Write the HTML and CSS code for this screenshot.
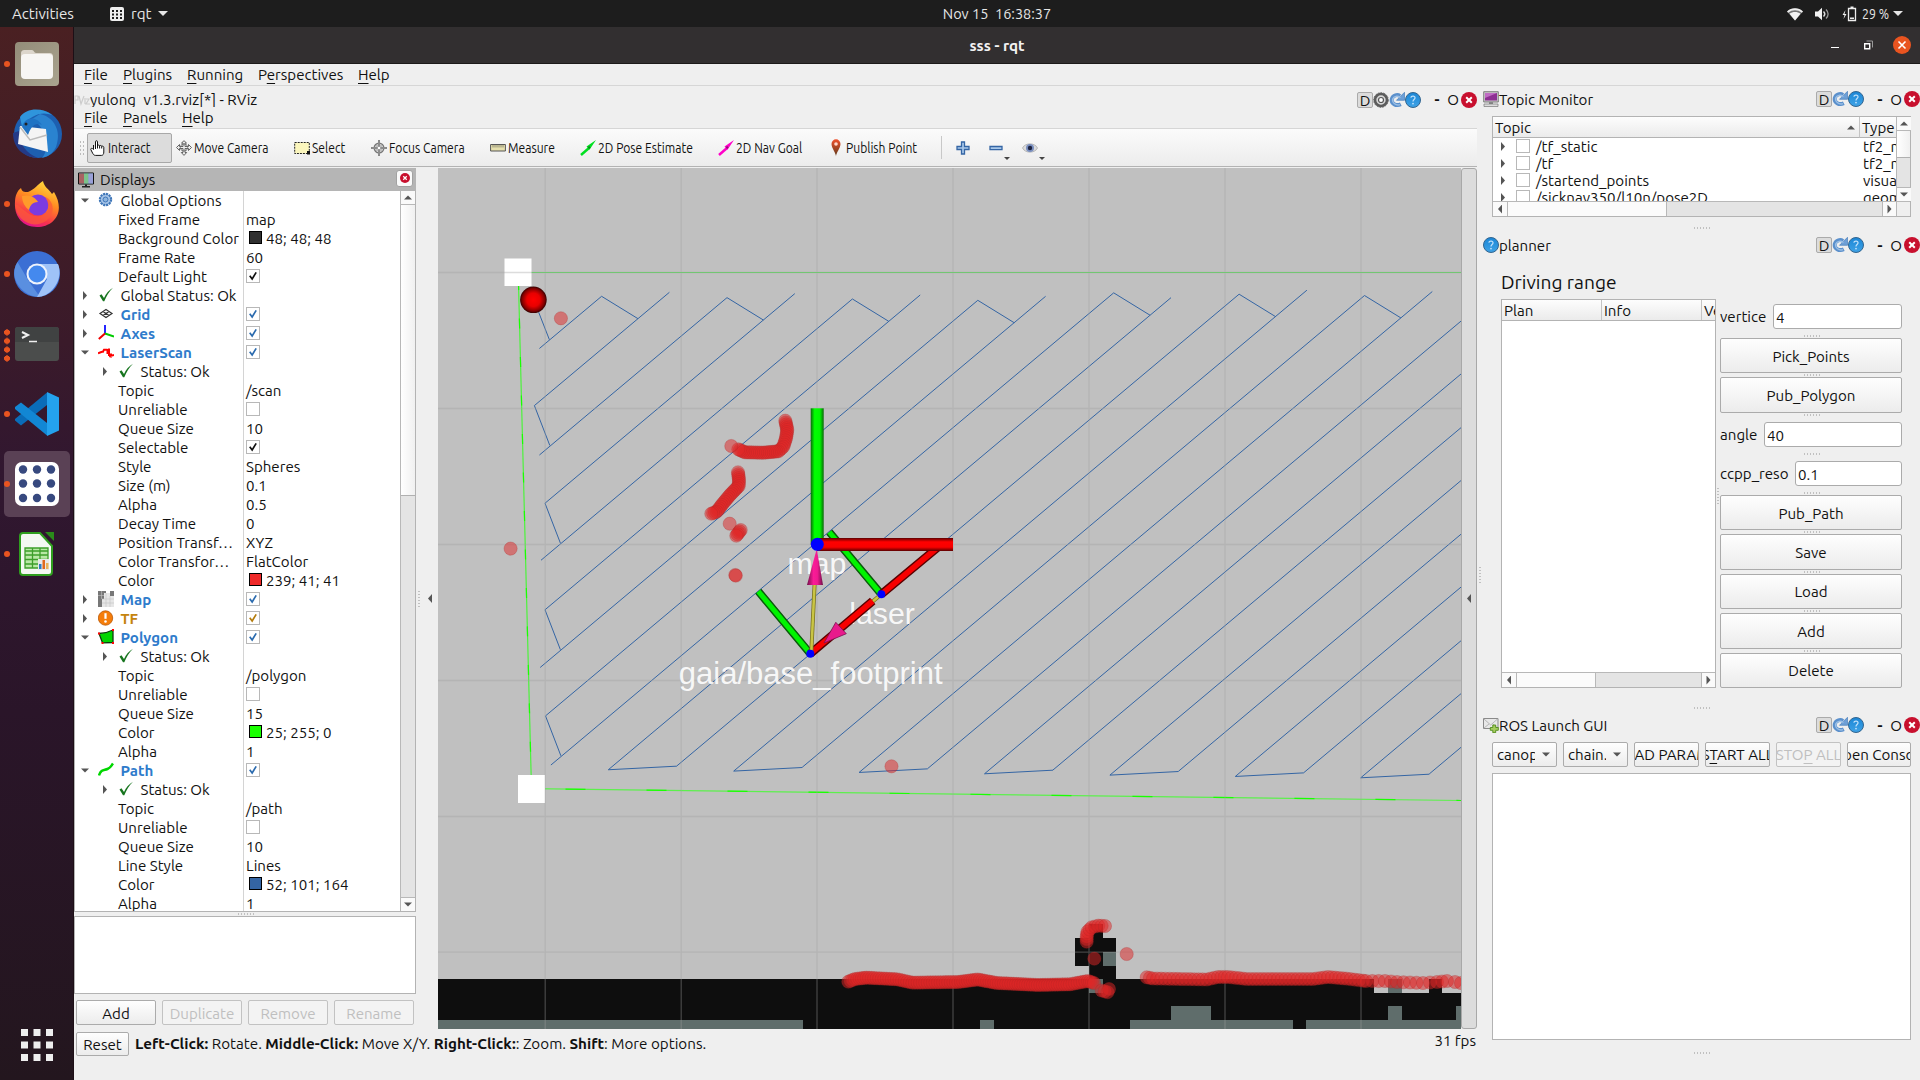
FILE: index.html
```html
<!DOCTYPE html>
<html lang="en">
<head>
<meta charset="utf-8">
<title>sss - rqt</title>
<link rel="stylesheet" href="styles.css">
</head>
<body>
<svg class="defs" width="0" height="0">
  <defs>
    <linearGradient id="gBlue" x1="0" y1="0" x2="0" y2="1"><stop offset="0" stop-color="#1b86d6"/><stop offset="1" stop-color="#3fa3e6"/></linearGradient>
    <linearGradient id="gFox" x1=".8" y1="0" x2=".4" y2="1"><stop offset="0" stop-color="#ffe23e"/><stop offset=".45" stop-color="#ff8a22"/><stop offset=".8" stop-color="#f8344b"/><stop offset="1" stop-color="#e31587"/></linearGradient>
    <linearGradient id="gFiles" x1="0" y1="0" x2="1" y2="1"><stop offset="0" stop-color="#938c79"/><stop offset="1" stop-color="#aaa48f"/></linearGradient>
    <linearGradient id="gPin" x1="0" y1="0" x2="0" y2="1"><stop offset="0" stop-color="#f0512c"/><stop offset="1" stop-color="#5d3a1c"/></linearGradient>
    <linearGradient id="gGreenV"><stop offset="0" stop-color="#0a6a0a"/><stop offset=".3" stop-color="#00ff00"/><stop offset=".7" stop-color="#00f800"/><stop offset="1" stop-color="#0a6a0a"/></linearGradient>
    <linearGradient id="gRedH" x1="0" y1="0" x2="0" y2="1"><stop offset="0" stop-color="#5a0000"/><stop offset=".3" stop-color="#ff0000"/><stop offset=".7" stop-color="#f80000"/><stop offset="1" stop-color="#5a0000"/></linearGradient>
    <linearGradient id="gCone"><stop offset="0" stop-color="#6e1148"/><stop offset=".4" stop-color="#fb1b98"/><stop offset=".65" stop-color="#f01a90"/><stop offset="1" stop-color="#6e1148"/></linearGradient>
    <radialGradient id="gBall"><stop offset="0" stop-color="#ff0000"/><stop offset=".5" stop-color="#e80000"/><stop offset=".85" stop-color="#800000"/><stop offset="1" stop-color="#300"/></radialGradient>
    <symbol id="check" viewBox="0 0 16 16"><path d="M1.5 8.5 3.5 7.2 6 11C8 6.500 11 3 15 .8 11 4.500 8.500 9 6.300 14.300L5 14.300Z" fill="#17751f"/></symbol>
    <symbol id="tick" viewBox="0 0 14 14"><path d="M3.200 6.800 6 10.500 10.700 2.800" fill="none" stroke="currentColor" stroke-width="2"/></symbol>
    <symbol id="gearb" viewBox="0 0 16 16"><circle cx="7.500" cy="7.500" r="5.600" fill="#a9c6e8" stroke="#3f76b8" stroke-width="2.200" stroke-dasharray="2.200 .7"/><circle cx="7.500" cy="7.500" r="2.500" fill="#8db4de" stroke="#3f76b8"/></symbol>
    <symbol id="grid" viewBox="0 0 16 16"><path d="M8 3.500 14 7.500 8 11.500 2 7.500ZM5 5.500 11 9.500M11 5.500 5 9.500" fill="none" stroke="#333" stroke-width="1.200"/></symbol>
    <symbol id="axes" viewBox="0 0 16 16"><path d="M7 9V0" stroke="#00f" stroke-width="1.700"/><path d="M7 8.500 16 11.500" stroke="#0c0" stroke-width="1.900"/><path d="M7 8.500 .8 14" stroke="#e00" stroke-width="2"/></symbol>
    <symbol id="scan" viewBox="0 0 16 16"><path d="M0 9.300 4 7.800M4.500 8.500 6 5.800H9.500M9.500 5V10M11 4.500V12M11 12.200 16 11M13 9.500V13.500" fill="none" stroke="#f00" stroke-width="2"/></symbol>
    <symbol id="mapi" viewBox="0 0 16 16"><path d="M0 0H8V2H6V8H4V16H0Z" fill="#777"/><path d="M12 0H16V5H12Z" fill="#777"/><path d="M8 2H12V5H16V16H4V8H6V2Z" fill="#e6e6e6"/><path d="M4 8H16M4 12H16M8 2V16M12 5V16M3.500 0V8M0 4.500H6" stroke="#c2c2c2" stroke-width=".6"/></symbol>
    <symbol id="warn" viewBox="0 0 16 16"><circle cx="7.500" cy="8" r="7.200" fill="#f57d0a" stroke="#b95503" stroke-width=".8"/><path d="M7.500 3.200V8.800" stroke="#fff" stroke-width="2.200"/><circle cx="7.500" cy="11.500" r="1.300" fill="#fff"/></symbol>
    <symbol id="poly" viewBox="0 0 16 16"><path d="M1 4.500C6 4.500 11 3 15 1V13.500L4.500 13.800Z" fill="#00d600" stroke="#0b3b0b" stroke-width="1.300"/><path d="M0 3.500h2v2H0zM14 0h2v2h-2zM3.500 13h2v2h-2zM14 13h2v2h-2z" fill="#f00"/></symbol>
    <symbol id="path" viewBox="0 0 16 16"><path d="M1 13.500C3 7 6 8.500 9.500 7 13 5.500 13 4 15 1.500" fill="none" stroke="#00d600" stroke-width="2.500"/></symbol>
    <symbol id="disp" viewBox="0 0 16 16"><path d="M.5 1h15v11H.5z" fill="#7ab" stroke="#111"/><path d="M1 1.500h5v10H1z" fill="#a86262"/><path d="M6 1.500h4.500v10H6z" fill="#7cc28a"/><path d="M10.500 1.500H15v10h-4.500z" fill="#9aa0d8"/><path d="M7 12.500h2v1.500h3v1.500H4V14h3z" fill="#222"/></symbol>
    <symbol id="closex" viewBox="0 0 16 16"><circle cx="8" cy="8" r="8" fill="#c8102e"/><path d="M5.200 5.200 10.800 10.800M10.800 5.200 5.200 10.800" stroke="#fff" stroke-width="2"/></symbol>
    <symbol id="help" viewBox="0 0 16 16"><circle cx="8" cy="8" r="7.500" fill="url(#gBlue)" stroke="#33658f"/><path d="M5.800 5.600C6.300 3.400 10.200 3.600 10 6 9.800 7.500 8 7.600 8 9.500" fill="none" stroke="#bfe0fa" stroke-width="1.300"/><circle cx="8" cy="11.600" r=".9" fill="#bfe0fa"/></symbol>
    <symbol id="reload" viewBox="0 0 16 16"><path d="M11.800 12.200C7 14.500 2 11.500 2.800 7 4 3 8.500 2.200 11 4" fill="none" stroke="#5b90cc" stroke-width="4"/><path d="M15.500.3V8.300H7.500Z" fill="#6d9fd6" stroke="#4a80bd" stroke-width=".7"/><path d="M11 12.600C7 13.800 3 11 3.700 7 5 4 8.500 3.500 11.500 5.500" fill="none" stroke="#9cc0e6" stroke-width="1.500"/></symbol>
    <symbol id="gear" viewBox="0 0 16 16"><circle cx="8" cy="8" r="6" fill="#d8d8d8" stroke="#5c5c5c" stroke-width="2.600"/><circle cx="8" cy="8" r="7.300" fill="none" stroke="#666" stroke-dasharray="1.800 1"/><circle cx="8" cy="8" r="2.500" fill="#fff" stroke="#555" stroke-width="1.200"/></symbol>
    <symbol id="monitor" viewBox="0 0 16 16"><path d="M.7.700h14.600v10.300H.7z" fill="#c9c9c9" stroke="#666" stroke-width=".8"/><path d="M2 2h12v7.500H2z" fill="#8d2f92"/><path d="M2 2h12L2 7z" fill="#c06cc4"/><path d="M6 11h4v2H6z" fill="#888"/><path d="M1 13h14v2.500H1z" fill="#ddd" stroke="#777" stroke-width=".7"/></symbol>
    <symbol id="mail" viewBox="0 0 16 16"><path d="M.5 1.500h14.500v10H.5z" fill="#e8e8e8" stroke="#8a8a8a"/><path d="M1 2 7.700 8 14.500 2M1 11 6 7M14.500 11 9.500 7" fill="none" stroke="#aaa" stroke-width=".8"/><path d="M9.800 8h2.900v2.500h2.600v2.800h-2.600v2.400H9.800v-2.400H7.300v-2.800h2.500z" fill="#a5cc5e" stroke="#4e8a16" stroke-width=".9"/></symbol>
    <symbol id="hand" viewBox="0 0 16 16"><path d="M5.500 9V1.800C5.500.3 7.500.3 7.500 1.800V6.500 5.500C8 4.800 9.500 5 9.600 6 10 5.200 11.500 5.300 11.700 6.300 12.500 5.800 13.800 6.200 13.800 7.500V12C13.800 14 13 15.400 11.500 15.400H5.500C4 15.400 3.500 14.500 2.800 13.500L.8 9.500C.6 8.500 1.500 8 2.500 8.600L3.500 9.500 3.500 5M9.600 6V8.500M11.700 6.300V8.500M7.500 6V8.500" fill="#fff" stroke="#111"/></symbol>
    <symbol id="move" viewBox="0 0 16 16"><path d="M8 .7 10.500 3H9V6.500H12.500V4.500L15.500 7.500 12.500 10.500V8.500H9V12.500H10.700L8 15.400 5.300 12.500H7V8.500H3.500V10.500L.5 7.500 3.500 4.500V6.500H7V3H5.500Z" fill="#eee" stroke="#555" stroke-width=".9"/><circle cx="8" cy="7.500" r="3.600" fill="none" stroke="#666" stroke-width=".8"/></symbol>
    <symbol id="select" viewBox="0 0 16 16"><path d="M.7 2.500h14.600v11H.7z" fill="#fbf6bd" stroke="#222" stroke-dasharray="2 1"/><path d="M13 11l3 0v3.500h-3z" fill="#111"/></symbol>
    <symbol id="focus" viewBox="0 0 16 16"><circle cx="8" cy="8" r="4.800" fill="#e8e8e8" stroke="#777" stroke-width="1.400"/><path d="M8 0V16M0 8H16" stroke="#888" stroke-width="2"/><path d="M8 1V15M1 8H15M6 4.500V11.500M10 4.500V11.500M4.500 6H11.500M4.500 10H11.500" stroke="#999" stroke-width=".6"/><circle cx="8" cy="8" r="1.300" fill="#fff"/></symbol>
    <symbol id="ruler" viewBox="0 0 16 16"><path d="M.6 4.500h14.800v6.500H.6z" fill="#e6e0ae" stroke="#555"/><path d="M3 5v2.500M5 5v2.500M7 5v2.500M9 5v2.500M11 5v2.500M13 5v2.500" stroke="#776" stroke-width=".8"/></symbol>
    <symbol id="arrow" viewBox="0 0 16 16"><path d="M1 15 9 8" stroke="currentColor" stroke-width="2.500"/><path d="M16 0 6.500 6.500 9.500 9.800Z" fill="currentColor"/><path d="M8.500 6.500 9.800 8.300" stroke="#222" stroke-opacity=".5" stroke-width="2"/></symbol>
    <symbol id="pin" viewBox="0 0 16 18"><path d="M8 17.500C8 14 3.500 9 3.500 5A4.500 4.700 0 0 1 12.500 5C12.500 9 8 14 8 17.500Z" fill="url(#gPin)"/><circle cx="8" cy="5" r="1.800" fill="#ffd9cc"/></symbol>
    <symbol id="plus" viewBox="0 0 14 14"><path d="M5.500 1h3v4.500H13v3H8.500V13h-3V8.500H1v-3h4.500z" fill="#a8c8ea" stroke="#3465a4" stroke-width="1.300"/></symbol>
    <symbol id="minus" viewBox="0 0 14 14"><path d="M1 5.500h12v3.200H1z" fill="#a8c8ea" stroke="#3465a4" stroke-width="1.300"/></symbol>
    <symbol id="eye" viewBox="0 0 16 16"><path d="M.5 8C3 2.500 13 2.500 15.500 8 13 13.500 3 13.500.5 8Z" fill="#dcdcdc" stroke="#aaa" stroke-width=".8"/><circle cx="8" cy="8" r="4" fill="#7a8fc0"/><circle cx="8" cy="8" r="2.200" fill="#1d2340"/></symbol>
  </defs>
</svg>

<header class="topbar">
  <div class="tb-left"><span class="act">Activities</span>
    <svg width="14" height="14" viewBox="0 0 14 14"><rect width="14" height="14" rx="2" fill="#eee"/><path d="M2 3h2v2H2zM6 3h2v2H6zM10 3h2v2h-2zM2 6.500h2v2H2zM6 6.500h2v2H6zM10 6.500h2v2h-2zM2 10h2v2H2zM6 10h2v2H6zM10 10h2v2h-2z" fill="#1d1d1d"/></svg>
    <span>rqt</span><i class="tri"></i></div>
  <div class="clock">Nov 15&nbsp; 16:38:37</div>
  <div class="tb-right">
    <svg class="wifi" width="16" height="14" viewBox="0 0 16 14"><path d="M0 4.500C4.500.2 11.500.2 16 4.500L8 13.500Z" fill="#777"/><path d="M0 4.500C4.500.2 11.500.2 16 4.500L14.800 5.800C11 2.500 5 2.500 1.200 5.800Z" fill="#eee"/><path d="M2.500 6.800C5.500 4.300 10.500 4.300 13.500 6.800L8 13.500Z" fill="#f2f2f2"/></svg>
    <svg class="vol" width="14" height="14" viewBox="0 0 14 14"><path d="M0 4.500h3L7 .8v12.400L3 9.500H0z" fill="#f2f2f2"/><path d="M8.500 4.500c1.500 1.500 1.500 3.500 0 5" stroke="#ddd" fill="none" stroke-width="1.500"/><path d="M11 2.500c2.800 2.700 2.800 6.300 0 9" stroke="#999" fill="none" stroke-width="1.300"/></svg>
    <svg width="15" height="16" viewBox="0 0 15 16"><path d="M3.500 4 .5 9h2L1.500 13 4.500 8h-2z" fill="#eee"/><path d="M6.500 2.500h7v12h-7z" fill="none" stroke="#eee" stroke-width="1.300"/><path d="M8.500.5h3v2h-3zM8 11.500h4v1.500H8z" fill="#eee"/></svg>
    <span class="cond">29 %</span><i class="tri"></i>
  </div>
</header>

<div class="body">
<nav class="dock">
  <div class="app"><i class="dot"></i><svg width="44" height="44" viewBox="0 0 44 44"><rect width="44" height="44" rx="4" fill="url(#gFiles)"/><path d="M6 12c0-3 1-4 4-4h7c2 0 2 3 4 3h13c3 0 4 1 4 4v5H6z" fill="#dcd6cc"/><rect x="6" y="12" width="32" height="25" rx="4" fill="#f7f6f4"/></svg></div>
  <div class="app"><svg width="50" height="50" viewBox="0 0 50 50"><circle cx="26" cy="25" r="24" fill="#1d5fb0"/><path d="M8 8C14-1 30-2 40 6 30 2 18 6 10 18Z" fill="#2f95dc"/><path d="M28 5C42 8 50 22 44 38 40 46 34 48 30 49 38 40 36 20 20 10Z" fill="#2a83d0"/><path d="M1 24C1 38 10 48 26 49 14 44 8 36 7 22Z" fill="#243a86"/><path d="M8 17 34 20 36 43 6 35Z" fill="#f4f4f4"/><path d="M8 18 18 31 35 26" fill="none" stroke="#bbb" stroke-width="1.500"/><path d="M10 18C12 8 24 6 30 16 22 12 18 20 16 26Z" fill="#1f73c4"/><circle cx="14" cy="15" r="1.500" fill="#222"/></svg></div>
  <div class="app"><i class="dot"></i><svg width="46" height="48" viewBox="0 0 46 48"><path d="M1 22C1 16 3 11 7 8 8 12 10 12 14 12 20 10 24 4 29 1 30 7 35 9 38 14L40 12C52 32 40 47 23 47 8 47 0 36 1 22Z" fill="url(#gFox)"/><circle cx="24" cy="25" r="10.500" fill="#7b3be0"/><path d="M8 16C16 14 22 18 24 22 18 22 16 26 15 30 11 27 8 22 8 16Z" fill="#ff9a2a"/><path d="M1 24C8 26 14 38 26 36 36 34 36 24 31 17 40 20 42 34 32 41 18 50 2 40 1 24Z" fill="#fb5a3a" opacity=".75"/></svg></div>
  <div class="app"><i class="dot"></i><svg width="46" height="46" viewBox="0 0 46 46"><circle cx="23" cy="23" r="23" fill="#3b6fd4"/><path d="M3.500 11 14 29 26 46C10 46-7 28 3.500 11Z" fill="#5a8fe0"/><path d="M23 13H44C50 28 38 46 23 46L33 28Z" fill="#9fc3f8"/><circle cx="23" cy="23" r="10.500" fill="#eef3fc"/><circle cx="23" cy="23" r="8.500" fill="#4489ee"/></svg></div>
  <div class="app"><i class="dots4"></i><svg width="44" height="34" viewBox="0 0 44 34"><rect width="44" height="34" rx="3" fill="#4b4d4c"/><path d="M0 3Q0 0 3 0H41Q44 0 44 3V15H0Z" fill="#404242"/><path d="M7 5 13 8 7 11" fill="none" stroke="#f0f0f0" stroke-width="2"/><path d="M14 14.500h8" stroke="#f0f0f0" stroke-width="1.500"/></svg></div>
  <div class="app"><i class="dot"></i><svg width="44" height="44" viewBox="0 0 44 44"><path d="M32 .5V13L6 33.500 0 28.500V27Z" fill="#0a6cb8"/><path d="M6 10.500 32 31V43.500L0 17V15Z" fill="#1287d4"/><path d="M32 0 44 5.500V38.500L32 44Z" fill="#24a2ee"/></svg></div>
  <div class="app active"><i class="dot"></i><svg width="44" height="44" viewBox="0 0 44 44"><rect width="44" height="44" rx="7" fill="#fff"/><g fill="#37497f"><circle cx="8" cy="7.500" r="4.200"/><circle cx="22" cy="7.500" r="4.200"/><circle cx="36" cy="7.500" r="4.200"/><circle cx="8" cy="21.500" r="4.200"/><circle cx="22" cy="21.500" r="4.200"/><circle cx="36" cy="21.500" r="4.200"/><circle cx="8" cy="36" r="4.200"/><circle cx="22" cy="36" r="4.200"/><circle cx="36" cy="36" r="4.200"/></g></svg></div>
  <div class="app"><i class="dot"></i><svg width="35" height="44" viewBox="0 0 35 44"><path d="M4 1H21L33 14V40Q33 43 30 43H4Q1 43 1 40V4Q1 1 4 1Z" fill="#f4f8f2" stroke="#2f9e1e" stroke-width="2"/><path d="M26 0h9v9z" fill="#2a8a1a"/><path d="M6 16H29V36H6Z" fill="#b9e8a5" stroke="#3d9e2a" stroke-width="1.300"/><path d="M6 19H29M6 23H29M6 27.500H29M6 32H29M13.500 16V36M21 16V36" stroke="#3d9e2a" stroke-width="1.300"/><path d="M19 27h11v11H19z" fill="#e8e8e8"/><path d="M20 32h2.500v5H20z" fill="#2c7cc0"/><path d="M23.500 28H26v9h-2.500z" fill="#e0691d"/><path d="M27 31h2.500v6H27z" fill="#e8b45a"/></svg></div>
  <svg class="appgrid" width="32" height="32" viewBox="0 0 32 32" fill="#eee"><path d="M0 0h7v7H0zM12.500 0h7v7h-7zM25 0h7v7h-7zM0 12.500h7v7H0zM12.500 12.500h7v7h-7zM25 12.500h7v7h-7zM0 25h7v7H0zM12.500 25h7v7h-7zM25 25h7v7h-7z"/></svg>
</nav>

<main class="win">
  <div class="titlebar"><span class="wt">sss - rqt</span>
    <div class="wbtns"><i class="min"></i><svg width="9" height="10" viewBox="0 0 9 10"><path d="M.7 3.700h5v5h-5z" fill="none" stroke="#fff" stroke-width="1.400"/><path d="M2.500 1h6v6.500" fill="none" stroke="#999"/></svg>
    <svg width="18" height="18" viewBox="0 0 18 18"><circle cx="9" cy="9" r="9" fill="#e95420"/><path d="M5.500 5.500 12.500 12.500M12.500 5.500 5.500 12.500" stroke="#fff" stroke-width="1.600"/></svg></div>
  </div>
  <div class="menubar main"><span><u>F</u>ile</span><span><u>P</u>lugins</span><span><u>R</u>unning</span><span>P<u>e</u>rspectives</span><span><u>H</u>elp</span></div>

  <div class="cols">
  <section class="rviz">
    <div class="docktitle"><svg class="rvlogo" width="16" height="12" viewBox="0 0 16 12"><path d="M1 10V2h3v4H1M5 2l2 8 3-8M11 4v6M12 5h3l-3 5h4" fill="none" stroke="#ccc" stroke-width="1.200"/></svg><span class="clip">yulong_v1.3.rviz[*] - RViz</span>
      <div class="tools"><b class="d">D</b><svg><use href="#gear"/></svg><svg><use href="#reload"/></svg><svg><use href="#help"/></svg><b class="m">-</b><b class="o">O</b><svg><use href="#closex"/></svg></div></div>
    <div class="menubar sub"><span><u>F</u>ile</span><span><u>P</u>anels</span><span><u>H</u>elp</span></div>
    <div class="toolbar">
      <i class="grip"></i>
      <div class="tool on"><svg><use href="#hand"/></svg><span>Interact</span></div>
      <div class="tool"><svg><use href="#move"/></svg><span>Move Camera</span></div>
      <div class="tool"><svg><use href="#select"/></svg><span>Select</span></div>
      <div class="tool"><svg><use href="#focus"/></svg><span>Focus Camera</span></div>
      <div class="tool"><svg><use href="#ruler"/></svg><span>Measure</span></div>
      <div class="tool pose"><svg><use href="#arrow"/></svg><span>2D Pose Estimate</span></div>
      <div class="tool nav"><svg><use href="#arrow"/></svg><span>2D Nav Goal</span></div>
      <div class="tool"><svg class="pin"><use href="#pin"/></svg><span>Publish Point</span></div>
      <div class="sep"></div>
      <svg class="s14"><use href="#plus"/></svg>
      <div class="drop"><svg class="s14"><use href="#minus"/></svg><i class="tri sm"></i></div>
      <div class="drop"><svg><use href="#eye"/></svg><i class="tri sm"></i></div>
    </div>
    <div class="work">
      <div class="displays">
        <div class="dhead"><svg><use href="#disp"/></svg><span>Displays</span><div class="xb"><svg width="10" height="10"><use href="#closex"/></svg></div></div>
        <div class="tree">
          <div class="rows">
            <div class="r"><i class="a dn"></i><svg><use href="#gearb"/></svg><span>Global Options</span></div><div class="v"></div>
            <div class="r p">Fixed Frame</div><div class="v">map</div>
            <div class="r p">Background Color</div><div class="v"><i class="sw dark"></i>48; 48; 48</div>
            <div class="r p">Frame Rate</div><div class="v">60</div>
            <div class="r p">Default Light</div><div class="v"><svg class="cb"><use href="#tick"/></svg></div>
            <div class="r"><i class="a"></i><svg><use href="#check"/></svg><span>Global Status: Ok</span></div><div class="v"></div>
            <div class="r n"><i class="a"></i><svg><use href="#grid"/></svg><span>Grid</span></div><div class="v"><svg class="cb bl"><use href="#tick"/></svg></div>
            <div class="r n"><i class="a"></i><svg><use href="#axes"/></svg><span>Axes</span></div><div class="v"><svg class="cb bl"><use href="#tick"/></svg></div>
            <div class="r n"><i class="a dn"></i><svg><use href="#scan"/></svg><span>LaserScan</span></div><div class="v"><svg class="cb bl"><use href="#tick"/></svg></div>
            <div class="r s"><i class="a"></i><svg><use href="#check"/></svg><span>Status: Ok</span></div><div class="v"></div>
            <div class="r p">Topic</div><div class="v">/scan</div>
            <div class="r p">Unreliable</div><div class="v"><svg class="cb"></svg></div>
            <div class="r p">Queue Size</div><div class="v">10</div>
            <div class="r p">Selectable</div><div class="v"><svg class="cb"><use href="#tick"/></svg></div>
            <div class="r p">Style</div><div class="v">Spheres</div>
            <div class="r p">Size (m)</div><div class="v">0.1</div>
            <div class="r p">Alpha</div><div class="v">0.5</div>
            <div class="r p">Decay Time</div><div class="v">0</div>
            <div class="r p">Position Transf…</div><div class="v">XYZ</div>
            <div class="r p">Color Transfor…</div><div class="v">FlatColor</div>
            <div class="r p">Color</div><div class="v"><i class="sw red"></i>239; 41; 41</div>
            <div class="r n"><i class="a"></i><svg><use href="#mapi"/></svg><span>Map</span></div><div class="v"><svg class="cb bl"><use href="#tick"/></svg></div>
            <div class="r n w"><i class="a"></i><svg><use href="#warn"/></svg><span>TF</span></div><div class="v"><svg class="cb or"><use href="#tick"/></svg></div>
            <div class="r n"><i class="a dn"></i><svg><use href="#poly"/></svg><span>Polygon</span></div><div class="v"><svg class="cb bl"><use href="#tick"/></svg></div>
            <div class="r s"><i class="a"></i><svg><use href="#check"/></svg><span>Status: Ok</span></div><div class="v"></div>
            <div class="r p">Topic</div><div class="v">/polygon</div>
            <div class="r p">Unreliable</div><div class="v"><svg class="cb"></svg></div>
            <div class="r p">Queue Size</div><div class="v">15</div>
            <div class="r p">Color</div><div class="v"><i class="sw green"></i>25; 255; 0</div>
            <div class="r p">Alpha</div><div class="v">1</div>
            <div class="r n"><i class="a dn"></i><svg><use href="#path"/></svg><span>Path</span></div><div class="v"><svg class="cb bl"><use href="#tick"/></svg></div>
            <div class="r s"><i class="a"></i><svg><use href="#check"/></svg><span>Status: Ok</span></div><div class="v"></div>
            <div class="r p">Topic</div><div class="v">/path</div>
            <div class="r p">Unreliable</div><div class="v"><svg class="cb"></svg></div>
            <div class="r p">Queue Size</div><div class="v">10</div>
            <div class="r p">Line Style</div><div class="v">Lines</div>
            <div class="r p">Color</div><div class="v"><i class="sw blue"></i>52; 101; 164</div>
            <div class="r p">Alpha</div><div class="v">1</div>
          </div>
          <div class="vsb"><div class="sbb"><i class="a up"></i></div><div class="thumb"></div><div class="track"></div><div class="sbb"><i class="a dn"></i></div></div>
        </div>
        <i class="hdots"></i>
        <div class="descr"></div>
        <div class="btns"><div class="btn">Add</div><div class="btn off">Duplicate</div><div class="btn off">Remove</div><div class="btn off">Rename</div></div>
      </div>
      <div class="lsplit"><i class="vdots"></i><i class="a lf"></i></div>
      <svg class="scene" id="scene" width="1023" height="861" viewBox="438 168 1023 861">
        <rect x="438" y="168" width="1023" height="861" fill="#c0c0c0"/>
        <path fill="#0e0e0e" d="M438 979H1461V1029H438ZM1075 938H1116V966H1075ZM1089 924H1103V938H1089ZM1089 966H1116V979H1089Z"/>
        <path fill="#c0c0c0" d="M1374 979H1388V993H1374ZM1402 979H1429V993H1402ZM1442 979H1461V993H1442Z"/>
        <path fill="#5f6d6b" d="M438 1020H803V1029H438ZM980 1020H994V1029H980ZM1130 1020H1293V1029H1130ZM1171 1006H1211V1020H1171ZM1306 1020H1461V1029H1306ZM1388 1006H1402V1020H1388ZM1456 1006H1461V1020H1456ZM1388 979H1402V993H1388ZM1103 952H1116V966H1103ZM1089 979H1103V993H1089Z"/>
        <g id="coverage" fill="none" stroke="#3465a4" stroke-width="1"></g>
        <path d="M518 272.500H1461" stroke="#57dc57" stroke-width="1.200"/>
        <path d="M518.400 280 531.500 789" stroke="#4cf23c" stroke-width="1.200" fill="none"/>
        <path d="M518.400 280 531.500 789" stroke="#19ff00" stroke-width="1.200" fill="none" stroke-dasharray="10 28.500"/>
        <path d="M531.500 788.700 1461 800.500" stroke="#5cf04c" stroke-width="1.200" fill="none"/>
        <path d="M531.500 788.700 1461 800.500" stroke="#19ff00" stroke-width="1.200" fill="none" stroke-dasharray="20 61" stroke-dashoffset="-34"/>
        <path d="M504.500 258.500h27v27.500h-27zM518 775h27v28h-27z" fill="#fff"/>
        <path stroke="#a0a0a0" stroke-opacity=".37" stroke-width="1.300" d="M545.200 168V1029M681.200 168V1029M817 168V1029M953 168V1029M1089 168V1029M1225 168V1029M1361 168V1029M438 272.500H1461M438 408.500H1461M438 544.500H1461M438 680.500H1461M438 816.500H1461M438 952.200H1461"/>
        <g id="scanpoints"></g>
        <circle cx="533.400" cy="299.800" r="13.300" fill="url(#gBall)"/>
        <g class="labels"><text x="817" y="574">map</text><text x="882" y="624">laser</text><text class="wide" x="810.700" y="683.500">gaia/base_footprint</text></g>
        <path d="M829.300 532 881.300 594.300M758.300 591.300 810.300 653.700" stroke="#0a5a0a" stroke-width="8"/>
        <path d="M829.300 532 881.300 594.300M758.300 591.300 810.300 653.700" stroke="#00f400" stroke-width="5"/>
        <path d="M881.300 594.300 810.300 653.700" stroke="#77701e" stroke-width="4"/>
        <path d="M881.300 594.300 810.300 653.700" stroke="#c9c544" stroke-width="2.500"/>
        <path d="M881.300 594.300 940 545.500M872.700 601 810.300 653.700" stroke="#5a0000" stroke-width="8.500"/>
        <path d="M881.300 594.300 940 545.500M872.700 601 810.300 653.700" stroke="#f80000" stroke-width="5.600"/>
        <path d="M814.600 584 811.300 652" stroke="#77701e" stroke-width="4"/>
        <path d="M814.600 584 811.300 652" stroke="#c9c544" stroke-width="2.500"/>
        <rect x="810.700" y="408.300" width="13" height="136" fill="url(#gGreenV)"/>
        <rect x="817" y="538" width="136" height="13" fill="url(#gRedH)"/>
        <path d="M816.700 549 823 585H807Z" fill="url(#gCone)"/>
        <path d="M824 643 835.800 622.300 846.300 633.700Z" fill="#e81a8c" stroke="#7a1250" stroke-width=".8"/>
        <circle cx="817.300" cy="544.300" r="6.500" fill="#00f"/><circle cx="881.300" cy="594.300" r="4" fill="#00f"/><circle cx="810.300" cy="653.700" r="4" fill="#00f"/>
      </svg>
      <div class="rsplit"><i class="a lf"></i></div>
    </div>
    <div class="status"><div class="btn">Reset</div><p><b>Left-Click:</b> Rotate. <b>Middle-Click:</b> Move X/Y. <b>Right-Click:</b>: Zoom. <b>Shift</b>: More options.</p><span>31 fps</span></div>
  </section>

  <i class="vdots mid"></i>

  <aside class="side">
    <div class="docktitle"><svg><use href="#monitor"/></svg><span>Topic Monitor</span>
      <div class="tools"><b class="d">D</b><svg><use href="#reload"/></svg><svg><use href="#help"/></svg><b class="m">-</b><b class="o">O</b><svg><use href="#closex"/></svg></div></div>
    <div class="topics">
      <div class="tgrid">
        <div class="th">Topic<i class="a up"></i></div><div class="th">Type</div>
        <div class="td"><i class="a"></i><i class="cb"></i>/tf_static</div><div class="td ty">tf2_msgs</div>
        <div class="td"><i class="a"></i><i class="cb"></i>/tf</div><div class="td ty">tf2_msgs</div>
        <div class="td"><i class="a"></i><i class="cb"></i>/startend_points</div><div class="td ty">visualiz</div>
        <div class="td"><i class="a"></i><i class="cb"></i>/sicknav350/l10n/pose2D</div><div class="td ty">geometr</div>
      </div>
      <div class="vsb"><div class="sbb"><i class="a up"></i></div><div class="thumb"></div><div class="track"></div><div class="sbb"><i class="a dn"></i></div></div>
      <div class="hsb"><div class="sbb"><i class="a lf"></i></div><div class="thumb"></div><div class="track"></div><div class="sbb"><i class="a"></i></div></div>
      <div class="corner"></div>
    </div>
    <i class="hdots h1"></i>
    <div class="docktitle"><svg><use href="#help"/></svg><span>planner</span>
      <div class="tools"><b class="d">D</b><svg><use href="#reload"/></svg><svg><use href="#help"/></svg><b class="m">-</b><b class="o">O</b><svg><use href="#closex"/></svg></div></div>
    <h2>Driving range</h2>
    <div class="planner">
      <div class="ptable"><div class="phead"><span>Plan</span><span>Info</span><span>Ve</span></div><div class="pbody"></div>
        <div class="hsb"><div class="sbb"><i class="a lf"></i></div><div class="thumb"></div><div class="track"></div><div class="sbb"><i class="a"></i></div></div></div>
      <i class="vdots"></i>
      <div class="form">
        <div class="field"><label>vertice</label><div class="inp i1">4</div></div><i class="hdots"></i>
        <div class="btn">Pick_Points</div><i class="hdots"></i>
        <div class="btn">Pub_Polygon</div><i class="hdots"></i>
        <div class="field"><label>angle</label><div class="inp i2">40</div></div><i class="hdots"></i>
        <div class="field"><label>ccpp_reso</label><div class="inp i3">0.1</div></div><i class="hdots"></i>
        <div class="btn">Pub_Path</div><i class="hdots"></i>
        <div class="btn">Save</div><i class="hdots"></i>
        <div class="btn">Load</div><i class="hdots"></i>
        <div class="btn">Add</div><i class="hdots"></i>
        <div class="btn">Delete</div>
      </div>
    </div>
    <i class="hdots h2"></i>
    <div class="docktitle"><svg><use href="#mail"/></svg><span>ROS Launch GUI</span>
      <div class="tools"><b class="d">D</b><svg><use href="#reload"/></svg><svg><use href="#help"/></svg><b class="m">-</b><b class="o">O</b><svg><use href="#closex"/></svg></div></div>
    <div class="launch">
      <div class="btn combo"><span>canopen</span><i class="a dn"></i></div><div class="btn combo"><span>chain.l</span><i class="a dn"></i></div>
      <div class="btn"><span>LOAD PARAMS</span></div><div class="btn"><span>S<u>T</u>ART ALL</span></div><div class="btn off"><span>STO<u>P</u> ALL</span></div><div class="btn"><span>Open Console</span></div>
    </div>
    <div class="log"></div>
    <i class="hdots h3"></i>
  </aside>
  </div>
</main>
</div>
<script src="scene.js"></script>
</body>
</html>
```
FILE: styles.css
```css
* { box-sizing: border-box; }
body { margin: 0; width: 1920px; height: 1080px; overflow: hidden; display: flex; flex-direction: column; font: 15.1px/19px Ubuntu, "Noto Sans", sans-serif; color: #111; background: #efefef; }
.defs { position: absolute; }
svg { width: 16px; height: 16px; flex: none; display: block; }
svg[width] { width: auto; height: auto; }
u { text-decoration: underline; text-underline-offset: 3px; text-decoration-thickness: 1px; text-decoration-skip-ink: none; }
i { flex: none; display: block; }

/* top bar */
.topbar { height: 27px; background: #1d1d1d; color: #e6e6e6; display: grid; grid-template-columns: 1fr 200px 1fr; align-items: center; padding-right: 17px; }
.tb-left { display: flex; align-items: center; gap: 7px; padding-left: 12px; }
.tb-left .act { width: 91px; }
.clock { text-align: center; white-space: nowrap; transform: translateX(45.500px); font-size: 14.500px; }
.tb-right { display: flex; justify-content: flex-end; align-items: center; }
.wifi { margin-right: 12px; }
.vol { margin-right: 13px; }
.tb-right .cond { font-size: 14.500px; width: 27px; white-space: nowrap; transform: scaleX(.85); transform-origin: 0 50%; margin: 0 4px 0 5px; }
.tri { width: 0; height: 0; border: 5px solid transparent; border-top-color: currentColor; border-bottom: 0; }
.tri.sm { border-width: 3px 3px 0; border-top-color: #444; }

.body { flex: 1; display: flex; min-height: 0; }

/* dock */
.dock { width: 74px; background: linear-gradient(#4a2022, #3a1a2a 30%, #311730 42%, #2a1529 65%, #23161e); border-right: 1px solid #1d0f16; display: flex; flex-direction: column; align-items: center; padding-top: 2px; }
.app { width: 66px; height: 66px; margin: 2px 0; border-radius: 5px; display: flex; align-items: center; justify-content: center; position: relative; }
.app.active { background: #5a4155; }
.dot, .dots4 { position: absolute; left: 0; width: 6px; height: 6px; border-radius: 50%; background: #e95420; top: 30px; }
.dots4 { border-radius: 0; height: 34px; top: 17px; background: radial-gradient(circle, #e95420 2.800px, transparent 3.200px) 0 0/6px 8.700px; }
.appgrid { margin-top: auto; margin-bottom: 19px; }

/* window */
.win { flex: 1; display: flex; flex-direction: column; min-width: 0; }
.titlebar { height: 37px; background: #322f30; border-bottom: 1px solid #1c1a1a; color: #f2f2f2; font-weight: bold; position: relative; display: flex; align-items: center; justify-content: center; }
.wbtns { position: absolute; right: 9px; top: 9px; display: flex; align-items: center; gap: 20px; }
.wbtns .min { width: 8px; height: 1px; background: #fff; margin: 5px 5px 0 0; }
.menubar { display: grid; align-items: center; padding: 0 0 0 10px; height: 22px; }
.menubar span { white-space: nowrap; line-height: 18px; }
.main { grid-template-columns: 39px 64px 71px 100px auto; border-bottom: 1px solid #d6d6d6; }
.sub { grid-template-columns: 39px 59px auto; height: 22px; border-bottom: 1px solid #d6d6d6; }
.cols { flex: 1; display: flex; min-height: 0; }
.rviz { width: 1403px; display: flex; flex-direction: column; }
.docktitle { height: 21px; display: flex; align-items: center; padding-top: 6px; }
.docktitle > span { height: 21px; line-height: 21px; white-space: nowrap; flex: 1; }
.docktitle .clip { height: 15px; overflow: hidden; }
.rviz .docktitle > span { line-height: 16px; }
.tools { display: flex; align-items: center; width: 104px; }
.rviz .tools { width: 120px; }
.tools svg { width: 16px; height: 16px; }
.tools b { font-weight: normal; text-align: center; line-height: 15px; }
.tools .d { width: 16px; height: 16px; border: 1px solid #aaa; border-radius: 2px; background: #dcdcdc; line-height: 16px; }
.tools .m { width: 14px; margin-left: 9px; font-weight: bold; }
.tools .o { width: 14px; margin: 0 1px 0 2px; line-height: 17px; }
.toolbar { height: 38px; background: linear-gradient(#fbfbfb, #ececec); border-bottom: 1px solid #b3b3b3; display: flex; align-items: center; padding-left: 5px; }
.grip { width: 5px; height: 16px; background: radial-gradient(circle, #bbb .8px, transparent 1px) 0 0/3px 4px; margin-right: 3px; }
.tool { display: flex; align-items: center; gap: 2px; height: 30px; padding-left: 3px; white-space: nowrap; }
.tool span { transform: scaleX(.835); transform-origin: 0 50%; width: 0; font-size: 14.500px; }
.tool:nth-child(2) { width: 86px; } .tool:nth-child(3) { width: 118px; } .tool:nth-child(4) { width: 77px; }
.tool:nth-child(5) { width: 119px; } .tool:nth-child(6) { width: 90px; } .tool:nth-child(7) { width: 138px; }
.tool:nth-child(8) { width: 110px; } .tool:nth-child(9) { width: 116px; }
.tool.on { border: 1px solid #a8a8a8; background: #dcdcdc; border-radius: 2px; padding-left: 2px; width: 85px; margin-right: 1px; }
.pose svg { color: #00e020; } .nav svg { color: #ff00c8; }
.tool .pin { height: 18px; }
.sep { width: 1px; height: 23px; background: #c8c8c8; margin-right: 14px; }
.s14 { width: 14px; height: 14px; margin-right: 19px; }
.drop { display: flex; height: 30px; align-items: center; width: 33px; }
.drop svg { margin: 0; } .drop .tri { align-self: flex-end; margin-bottom: 3px; margin-left: 1px; }

.work { display: flex; height: 862px; padding-top: 1px; }
.displays { width: 342px; display: flex; flex-direction: column; }
.dhead { height: 23px; background: #b5b5b5; display: flex; align-items: center; padding-left: 4px; }
.dhead span { flex: 1; margin-left: 6px; }
.xb { width: 17px; height: 17px; border: 1px solid #a2a2a2; border-radius: 3px; background: #fafafa; display: flex; align-items: center; justify-content: center; margin: 0 3px 3px 0; }
.xb svg { width: 10px; height: 10px; }
.tree { height: 721px; border: 1px solid #b3b3b3; border-top: 0; background: #fff; display: flex; overflow: hidden; }
.rows { width: 326px; display: grid; grid-template-columns: 168px 1fr; grid-auto-rows: 19px; height: 720px; overflow: hidden; }
.r { display: flex; align-items: center; white-space: nowrap; }
.r svg { margin: 0 6.500px 0 3px; width: 16px; position: relative; top: -.5px; }
.r.p { padding-left: 43px; }
.r.s { padding-left: 20px; }
.r.n span { font-weight: bold; color: #2e7bcb; }
.r.w span { color: #c5840e; }
.v { border-left: 1px solid #d4d4d4; padding-left: 2px; display: flex; align-items: center; white-space: nowrap; }
.cb { width: 14px; height: 14px; border: 1px solid #b8b8b8; background: #fff; color: #111; position: relative; top: -.5px; }
.cb.bl { color: #2a6aae; } .cb.or { color: #b47b0b; }
.sw { width: 13px; height: 13px; border: 1px solid #000; margin: 0 4px 0 3px; position: relative; top: -1px; }
.dark { background: #303030; } .red { background: #ef2929; } .green { background: #19ff00; } .blue { background: #3465a4; }
/* small arrows */
.a { width: 20px; height: 9px; background: #555; clip-path: polygon(8px 0, 12px 50%, 8px 100%); }
.a.dn { clip-path: polygon(6px 2.500px, 14px 2.500px, 10px 6.500px); }
.a.up { clip-path: polygon(6px 6.500px, 14px 6.500px, 10px 2.500px); }
.a.lf { clip-path: polygon(12px 0, 8px 50%, 12px 100%); }
.vsb { width: 15px; border-left: 1px solid #b8b8b8; display: flex; flex-direction: column; background: #e4e4e4; }
.sbb { background: #fafafa; height: 14px; width: 14px; display: flex; align-items: center; justify-content: center; overflow: hidden; flex: none; }
.vsb .sbb:first-child { border-bottom: 1px solid #b8b8b8; }
.vsb .sbb:last-child { border-top: 1px solid #b8b8b8; }
.vsb .thumb { height: 291px; background: linear-gradient(90deg, #fff, #f0f0f0); border-bottom: 1px solid #b0b0b0; }
.track { flex: 1; }
.hdots { width: 17px; height: 2px; background: radial-gradient(circle, #c0c0c0 .8px, transparent 1px) 0 0/3px 2px; align-self: center; }
.vdots { width: 2px; height: 17px; background: radial-gradient(circle, #c0c0c0 .8px, transparent 1px) 0 0/2px 3px; }
.displays > .hdots { margin: 1px 0 1px; }
.descr { height: 78px; border: 1px solid #b3b3b3; background: #fff; }
.btns { display: flex; gap: 6px; padding: 6px 2px 0; }
.btn { height: 25px; border: 1px solid #ababab; border-radius: 2px; background: linear-gradient(#fefefe, #ececec); display: flex; align-items: center; justify-content: center; flex: none; white-space: nowrap; padding-top: 1px; }
.btns .btn { width: 80px; }
.btn.off { color: #bfbfbf; border-color: #c2c2c2; background: #f3f3f3; }
.lsplit { width: 22px; display: flex; align-items: center; padding-left: 2px; }
.scene { display: block; }
.labels { font: 30.300px "Liberation Sans", sans-serif; fill: #fff; fill-opacity: .9; text-anchor: middle; }
.labels .wide { font-size: 31px; }
.rsplit { width: 16px; border: 1px solid #a8a8a8; border-radius: 3px; background: #dcdcdc; display: flex; align-items: center; justify-content: center; overflow: hidden; }
.status { display: flex; align-items: flex-start; padding: 3px 1px 0 2px; white-space: nowrap; }
.status .btn { width: 53px; height: 24px; }
.status p { flex: 1; margin: 2px 0 0 6px; font-size: 15.200px; }
.status > span { margin-top: -1px; }

/* side column */
.vdots.mid { margin: 480px 2px 0 2px; }
.side { width: 437px; display: flex; flex-direction: column; }
.side > .docktitle { height: 21px; padding-top: 5px; flex: none; }
.topics { width: 419px; height: 101px; margin: 9px 0 0 9px; border: 1px solid #b3b3b3; background: #fff; display: grid; grid-template-columns: 403px 14px; grid-template-rows: 84px 15px; }
.tgrid { display: grid; grid-template-columns: 366px 37px; grid-template-rows: 21px repeat(4, 17px); overflow: hidden; }
.th { background: linear-gradient(#fdfdfd, #ebebeb); border-bottom: 1px solid #b3b3b3; padding: 1px 0 0 2px; display: flex; justify-content: space-between; overflow: hidden; }
.th .a { margin: 5px -2px 0 0; }
.th + .th { border-left: 1px solid #c4c4c4; }
.td { display: flex; align-items: center; white-space: nowrap; height: 17px; }
.td .a { margin-left: 0; } .td .cb { margin: 0 6px 0 3px; }
.ty { padding-left: 4px; }
.topics .vsb { width: 14px; }
.topics .vsb .thumb { height: 27px; }
.hsb { display: flex; border-top: 1px solid #b8b8b8; background: #e4e4e4; height: 15px; }
.hsb .thumb { background: #fbfbfb; border: solid #b8b8b8; border-width: 0 1px; width: 160px; }
.hsb .sbb:last-child { border-left: 1px solid #b8b8b8; }
.corner { border: solid #b8b8b8; border-width: 1px 0 0 1px; background: #efefef; }
.h1 { margin-top: 10px; }
.h1 + .docktitle { margin-top: 3px; }
h2 { font-weight: normal; font-size: 19.200px; line-height: 24px; margin: 17px 0 0 18px; }
.planner { display: flex; margin: 5px 0 0 18px; height: 390px; }
.ptable { width: 215px; height: 389px; border: 1px solid #b3b3b3; background: #fff; display: flex; flex-direction: column; }
.phead { display: grid; grid-template-columns: 100px 100px 13px; height: 21px; border-bottom: 1px solid #b3b3b3; background: linear-gradient(#fdfdfd, #ebebeb); }
.phead span { padding-left: 2px; overflow: hidden; border-right: 1px solid #c4c4c4; line-height: 21px; }
.phead span:last-child { border: 0; }
.pbody { flex: 1; }
.ptable .thumb { width: 80px; }
.planner > .vdots { margin: 188px 1px 0 1px; }
.form { width: 182px; display: flex; flex-direction: column; padding-top: 5px; }
.form .btn { height: 35.430px; }
.form .hdots { margin: 1px 0; }
.field { display: flex; justify-content: space-between; align-items: center; height: 25px; margin: 5px 0; flex: none; }
.field:first-child { margin-top: 0; }
.inp { height: 25px; border: 1px solid #ababab; border-radius: 3px; background: #fff; padding: 3px 2px; }
.i1 { width: 129px; } .i2 { width: 138px; } .i3 { width: 107px; }
.h2 { margin-top: 18px; }
.h2 + .docktitle { margin-top: 3px; }
.launch { display: flex; gap: 6px; margin: 9px 0 0 9px; }
.launch .btn { width: 65px; overflow: hidden; padding-top: 0; }
.launch .btn:last-child { width: 64px; }
.launch .combo { justify-content: space-between; padding-left: 4px; }
.combo span { width: 38px; overflow: hidden; }
.log { width: 419px; height: 267px; margin: 6px 0 0 9px; border: 1px solid #b3b3b3; background: #fff; }
.h3 { margin-top: 12px; }
```
FILE: scene.js
```js
const NS = 'http://www.w3.org/2000/svg';

// Boustrophedon coverage path at 40 degrees.
const DX = 125.4, DY = 1.34, SLOPE = 0.839;
const coverage = document.getElementById('coverage');
let d = '';
const leftA = [539.4, 539.4, 541, 540.2, 550.9];
const leftB = [534.4, 545, 545, 545.5];
const jumpA = k => (k >= 4 ? 10.5 : 0);
const jumpB = k => (k >= 5 ? 10.5 : 0);
for (let k = 0; k <= 11; k++) {
  const px = 601.6 + DX * k + jumpA(k), py = 296.3 + DY * k - jumpA(k) * SLOPE;
  const qx = 669.4 + DX * k + jumpB(k), qy = 292.3 + DY * k - jumpB(k) * SLOPE;
  const ax = k < 5 ? leftA[k] : 676.8 + DX * (k - 5);
  const ay = py + (px - ax) * SLOPE;
  const bx = k < 4 ? leftB[k] : 608.3 + DX * (k - 4);
  const by = qy + (qx - bx) * SLOPE;
  d += `M${ax} ${ay}L${px} ${py}l36.4 22.4M${qx} ${qy}`;
  if (k === 11) break;
  d += `L${bx} ${by}`;
  d += k < 4 ? 'l15.400 39.900' : 'l68.500 -3.600';
}
d += 'M538.700 312.300L549.400 339.700';
const path = document.createElementNS(NS, 'path');
path.setAttribute('d', d);
coverage.append(path);

// Laser scan returns: polylines sampled at a fixed step.
const strips = [
  [2.500, [848.3,981.7],[855,979],[866.6,977.7],[897,979.3],[912.5,982.7],[958.5,982],[977.6,979.5],[996.7,983],[1038,985],[1070,984.3],[1088,981],[1094,983]],
  [3, [1101.7,990.5],[1107.500,992.2],[1109,989]],
  [3, [1086.7,941.7],[1086.7,936.7],[1087.5,931.7],[1091.7,927.3],[1098.3,925.7],[1105,926]],
  [4, [1146.7,977.3],[1153,978.5],[1206.7,979.5],[1218,977],[1228,977],[1246.7,979],[1313,979],[1328,977],[1346.7,978.7],[1363,980.7]],
  [6.500, [1366,981],[1385,981],[1397,982],[1410,982.5],[1423,983],[1437,982],[1447,981],[1455,982],[1461,983]],
  [2, [785.3,420.7],[787.3,430],[786,438.3],[783.3,446.7],[778.3,451.3],[763.3,452.7],[745,452.3],[738.3,449.3]],
  [1, [731.3,446]],
  [2, [738,472.3],[739,480],[738.7,486],[730,495],[721.7,505],[716.7,511.7],[711.3,513.7]],
  [1, [729.7,523.7]], [2, [740.7,530],[736.3,535.7]],
  [1, [735.3,575],[735.8,575.6]], [1, [560.9,318.3]], [1, [510.6,548.6]], [1, [891.5,766.3]],
  [1, [1094.3,958.7]], [1, [1126.7,954]]
];
const group = document.getElementById('scanpoints');
const dot = (x, y) => {
  const c = document.createElementNS(NS, 'circle');
  c.setAttribute('cx', x); c.setAttribute('cy', y); c.setAttribute('r', 6.6);
  c.setAttribute('fill', '#e02525'); c.setAttribute('fill-opacity', '.5');
  c.setAttribute('stroke', '#b02828'); c.setAttribute('stroke-opacity', '.4'); c.setAttribute('stroke-width', '.7');
  group.append(c);
};
for (const [step, ...pts] of strips) {
  dot(...pts[0]);
  for (let i = 1; i < pts.length; i++) {
    const [x0, y0] = pts[i - 1], [x1, y1] = pts[i];
    const n = Math.max(1, Math.round(Math.hypot(x1 - x0, y1 - y0) / step));
    for (let j = 1; j <= n; j++) dot(x0 + (x1 - x0) * j / n, y0 + (y1 - y0) * j / n);
  }
}
```
